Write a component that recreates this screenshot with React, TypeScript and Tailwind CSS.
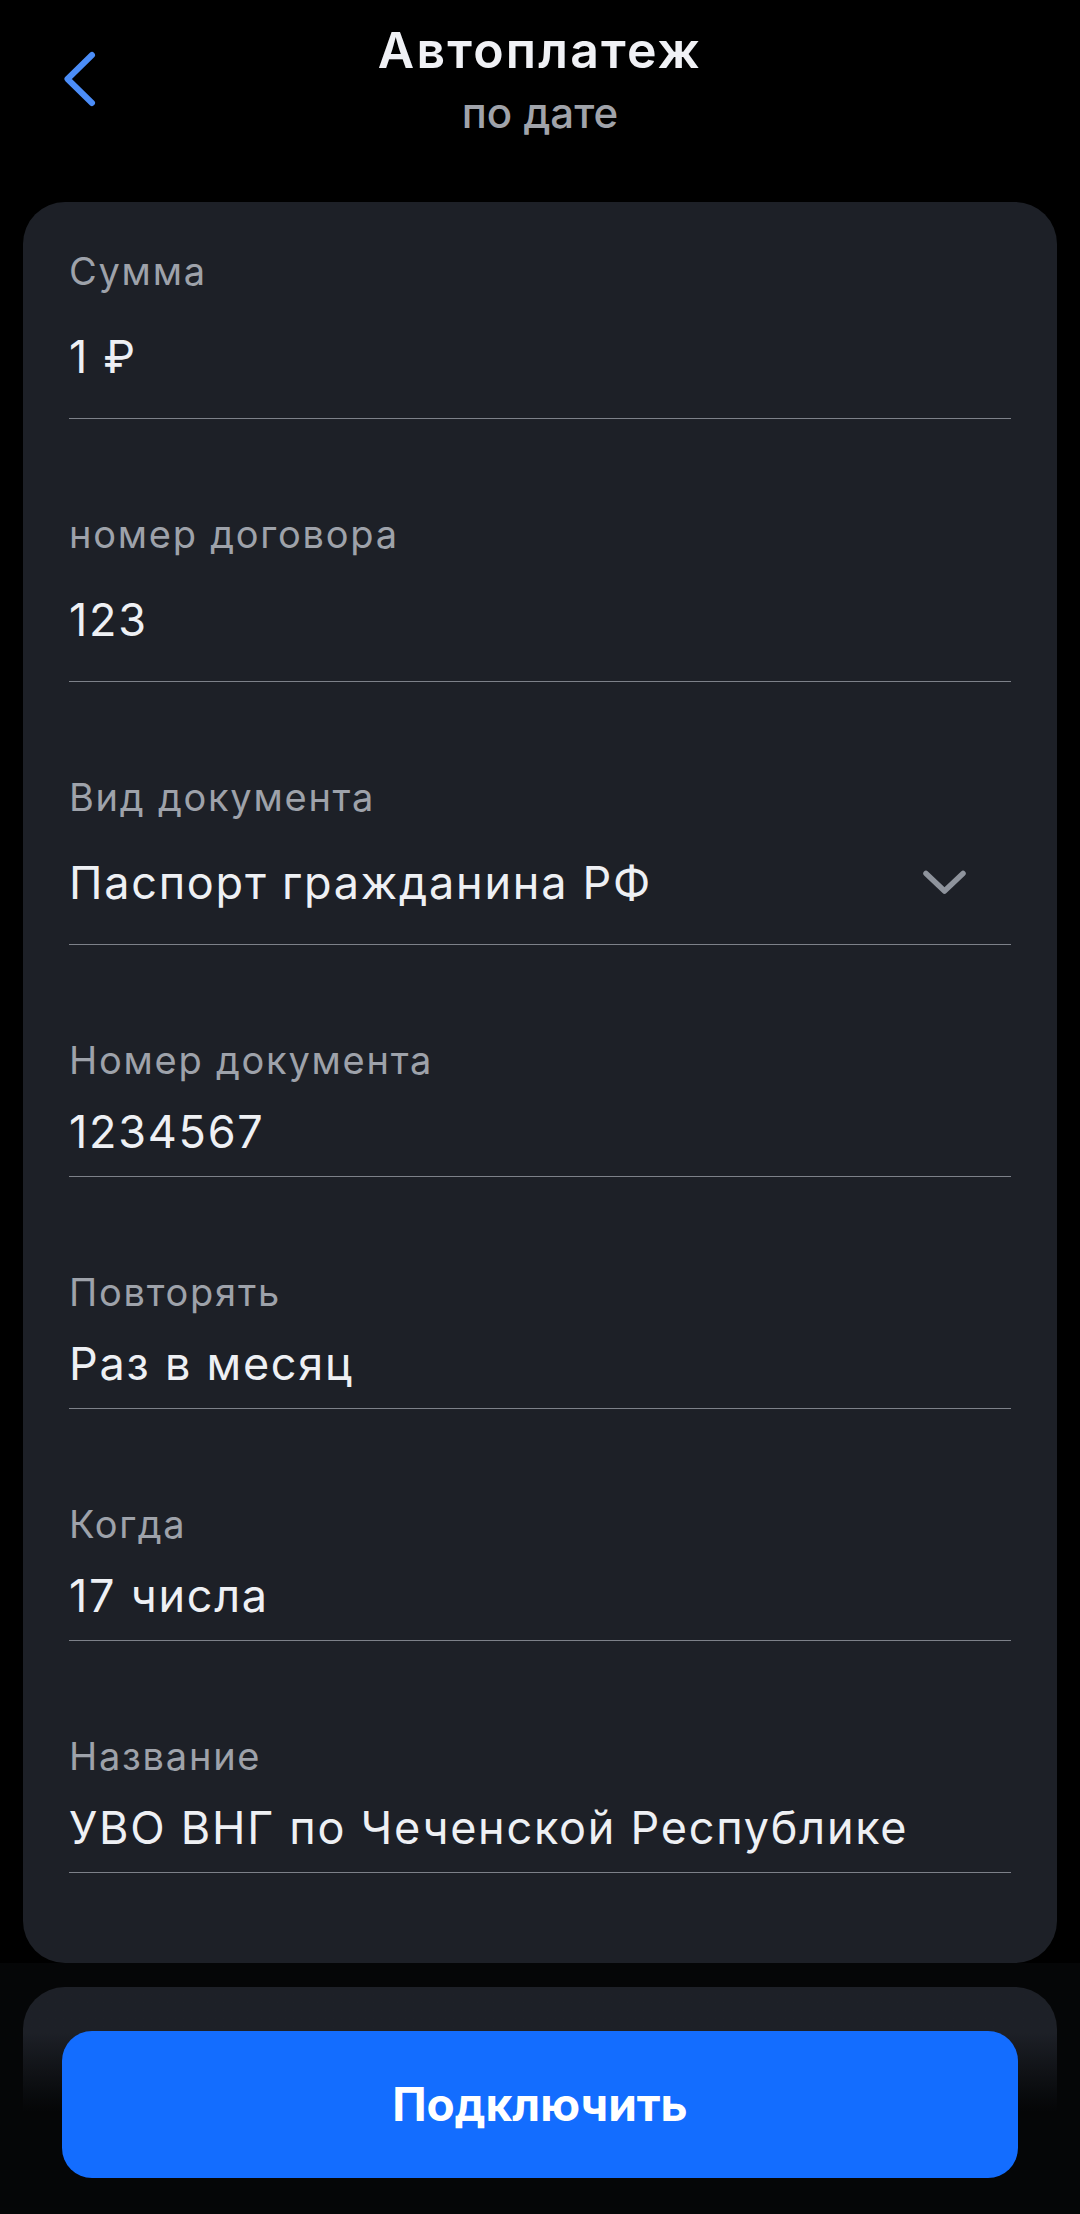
import React from "react";

const FONT = { fontFamily: "Inter, 'Noto Sans', sans-serif" };

function Divider() {
  return <div className="h-px w-full bg-[#7d8189]" />;
}

function InputField({ label, value, chevron }: { label: string; value: string; chevron?: boolean }) {
  return (
    <div className="flex flex-col">
      <div className="text-[38px] leading-[46px] tracking-[1.75px] text-[#9ea2aa]">{label}</div>
      <div className="mt-[36px] flex items-center justify-between">
        <div className="text-[45px] leading-[54px] tracking-[1.75px] text-[#eef0f4]">{value}</div>
        {chevron && (
          <svg width="49" height="28" viewBox="0 0 49 28" className="mr-[42px]" fill="none">
            <path d="M6 4.5 L24.5 22 L43 4.5" stroke="#8e939c" strokeWidth="5.5" strokeLinecap="round" strokeLinejoin="round" />
          </svg>
        )}
      </div>
      <div className="mt-[34px]">
        <Divider />
      </div>
    </div>
  );
}

function StaticField({ label, value }: { label: string; value: string }) {
  return (
    <div className="flex flex-col">
      <div className="text-[38px] leading-[46px] tracking-[1.75px] text-[#9ea2aa]">{label}</div>
      <div className="mt-[22px] text-[45px] leading-[54px] tracking-[1.75px] text-[#eef0f4]">{value}</div>
      <div className="mt-[17px]">
        <Divider />
      </div>
    </div>
  );
}

export default function App() {
  return (
    <div className="flex min-h-[2214px] w-[1080px] flex-col bg-black" style={FONT}>
      <header className="grid grid-cols-[1fr_auto_1fr]">
        <div className="pl-[58px] pt-[46px]">
          <svg width="42" height="66" viewBox="0 0 42 66" fill="none">
            <path d="M34 9 L9.5 33 L34 57" stroke="#4b8df8" strokeWidth="6" strokeLinecap="round" strokeLinejoin="round" />
          </svg>
        </div>
        <div className="flex flex-col items-center pt-[20px]">
          <div className="text-[50px] font-semibold leading-[60px] tracking-[2.2px] text-[#f0f1f5]">Автоплатеж</div>
          <div className="mt-[7px] text-[42px] font-medium leading-[52px] text-[#a0a3aa]">по дате</div>
        </div>
        <div />
      </header>

      <main className="mx-[23px] mt-[63px] flex flex-col gap-[92px] rounded-[42px] bg-[#1d2027] px-[46px] pb-[90px] pt-[46px]">
        <InputField label="Сумма" value="1 ₽" />
        <InputField label="номер договора" value="123" />
        <InputField label="Вид документа" value="Паспорт гражданина РФ" chevron />
        <StaticField label="Номер документа" value="1234567" />
        <StaticField label="Повторять" value="Раз в месяц" />
        <StaticField label="Когда" value="17 числа" />
        <StaticField label="Название" value="УВО ВНГ по Чеченской Республике" />
      </main>

      <div className="flex flex-1 flex-col bg-[#050607] pt-[24px]">
        <div className="mx-[23px] flex-1 rounded-t-[42px] bg-linear-to-b from-[#1d2027] from-20% to-[#050607] to-55% px-[39px] pt-[44px]">
          <button className="flex h-[147px] w-full items-center justify-center rounded-[30px] bg-[#136dff] text-[46px] font-bold text-white">
            Подключить
          </button>
        </div>
      </div>
    </div>
  );
}
